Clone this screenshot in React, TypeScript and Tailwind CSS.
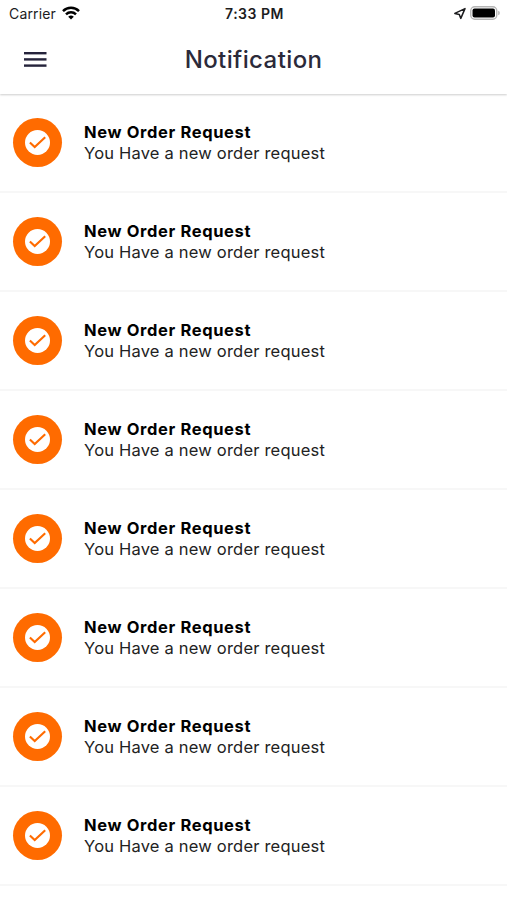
import React from 'react';

interface Notification {
  id: number;
  title: string;
  message: string;
}

const notifications: Notification[] = Array.from({ length: 8 }, (_, index) => ({
  id: index + 1,
  title: 'New Order Request',
  message: 'You Have a new order request',
}));

const StatusBar: React.FC = () => (
  <div className="grid h-7 grid-cols-3 items-center pl-[9px] pr-[7px] text-[14px] leading-7 text-[#1c1c1e]">
    <div className="flex items-center gap-[6px]">
      <span className="tracking-[0.15px]">Carrier</span>
      <svg className="-mt-[2px]" width="18" height="14" viewBox="0 0 18 14" fill="none" stroke="#000" strokeWidth="2.5">
        <path d="M1 5.1a11.4 11.4 0 0 1 16 0" />
        <path d="M4 8.3a7.2 7.2 0 0 1 10 0" />
        <path d="M9 13.6 6.2 10.8a4 4 0 0 1 5.6 0z" fill="#000" stroke="none" />
      </svg>
    </div>
    <span className="text-center font-semibold tracking-[0.5px]">7:33 PM</span>
    <div className="-mt-[2px] flex items-center justify-end gap-1">
      <svg width="13" height="13" viewBox="0 0 13 13" fill="none" stroke="#1c1c1e" strokeWidth="1.5" strokeLinejoin="round">
        <path d="M12 1.6 7.8 11.4 6.3 7.4 1.8 6.4z" />
      </svg>
      <svg width="30" height="14" viewBox="0 0 30 14">
        <rect x="0.75" y="0.75" width="26" height="12.5" rx="4" fill="#fff" stroke="#b5b5b5" strokeWidth="1.4" />
        <rect x="2.5" y="2.5" width="22.5" height="9" rx="2" fill="#000" />
        <path d="M28.2 4.8a2.3 2.3 0 0 1 0 4.4z" fill="#b5b5b5" />
      </svg>
    </div>
  </div>
);

const Header: React.FC = () => (
  <header className="relative z-10 h-[94px] bg-white shadow-[0_1px_2px_rgba(0,0,0,0.2)]">
    <StatusBar />
    <div className="grid h-[63px] grid-cols-[80px_1fr_80px] items-center">
      <button className="ml-6 w-fit" aria-label="Menu">
        <svg width="23" height="17" viewBox="0 0 23 17" fill="#25233b">
          <rect y="1" width="22.5" height="2.4" />
          <rect y="7.2" width="22.5" height="2.4" />
          <rect y="13.4" width="22.5" height="2.4" />
        </svg>
      </button>
      <h1 className="text-center text-[24px] font-medium tracking-[0.4px] text-[#2b2a3a]">Notification</h1>
    </div>
  </header>
);

const NotificationRow: React.FC<{ notification: Notification }> = ({ notification }) => (
  <li className="flex h-[99px] items-center border-b-2 border-[#f7f7f7] pl-[13px]">
    <div className="flex size-[49px] items-center justify-center rounded-full bg-[#ff6b00]">
      <svg width="25" height="25" viewBox="0 0 25 25" fill="none">
        <circle cx="12.5" cy="12.5" r="12.5" fill="#fff" />
        <path d="M4.9 12.4 9.7 17.1 20.2 7.2" stroke="#ff6b00" strokeWidth="2.1" />
      </svg>
    </div>
    <div className="ml-[22px]">
      <p className="text-[16.5px] font-bold leading-[21px] tracking-[0.64px] text-black">{notification.title}</p>
      <p className="text-[16.5px] leading-[21px] tracking-[0.2px] text-[#222]">{notification.message}</p>
    </div>
  </li>
);

const App: React.FC = () => {
  return (
    <div className="h-[900px] overflow-hidden bg-white font-['Inter',sans-serif]">
      <Header />
      <ul>
        {notifications.map((notification) => (
          <NotificationRow key={notification.id} notification={notification} />
        ))}
      </ul>
    </div>
  );
};

export default App;
